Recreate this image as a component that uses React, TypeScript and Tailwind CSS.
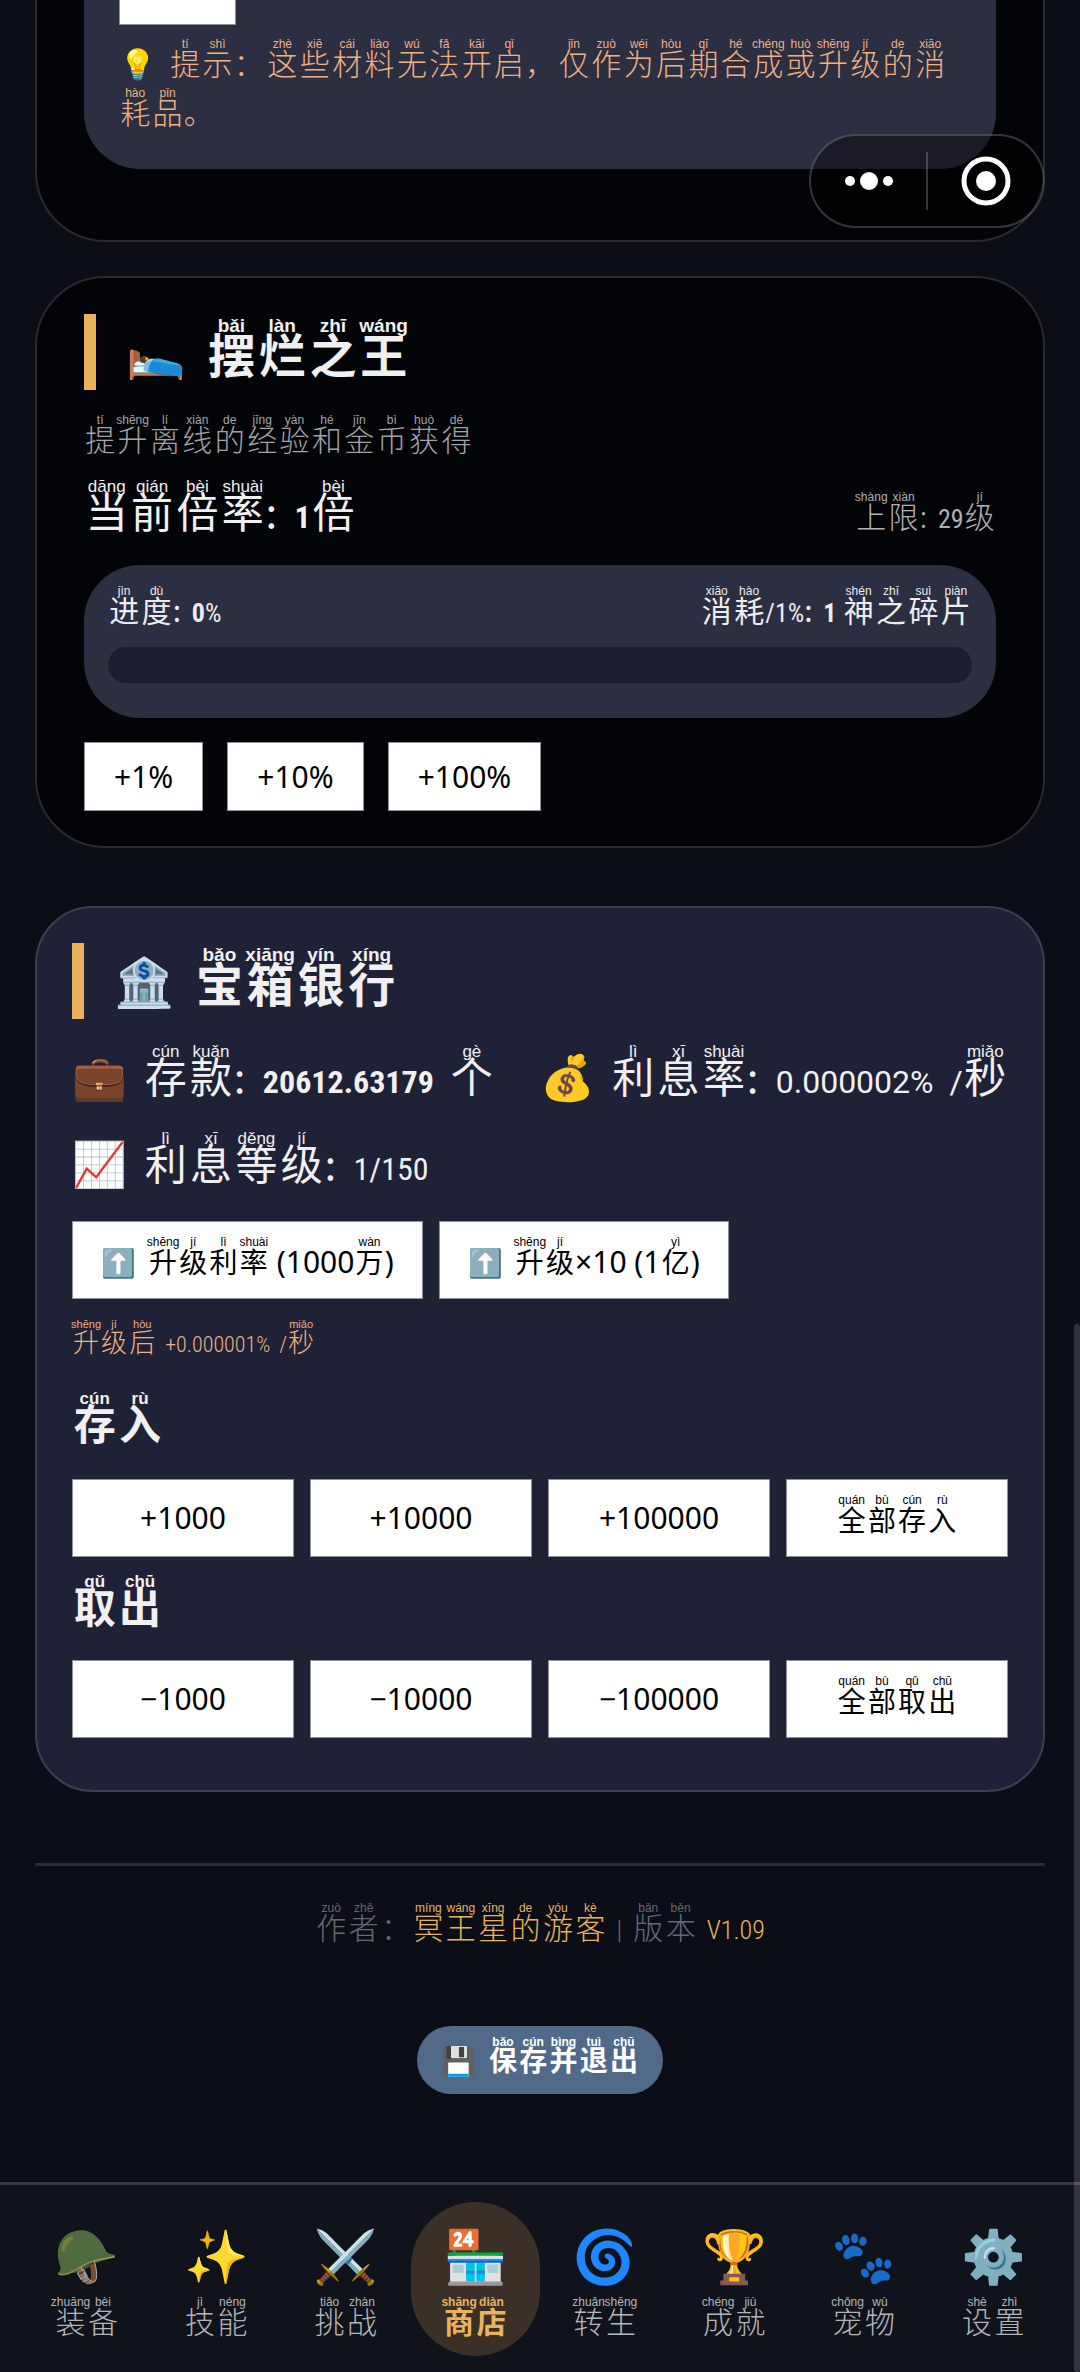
import type { ButtonHTMLAttributes, ReactNode } from "react";
import { clsx } from "clsx";

type Size = "title" | "section" | "body" | "button" | "note";

const SIZES: Record<Size, { base: string; rt: string; latin: string; colon: string }> = {
  title: { base: "text-[47px] font-bold", rt: "mt-0.5 -mb-0.5 text-[19px] font-bold", latin: "text-[36px]", colon: "mr-2" },
  section: { base: "text-[42px]", rt: "mt-0.5 -mb-0.5 text-[17px]", latin: "text-[32px]", colon: "mr-2" },
  body: { base: "text-[30px]", rt: "text-[12px]", latin: "text-[26px]", colon: "mr-1" },
  button: { base: "text-[28px]", rt: "text-[12px]", latin: "text-[30px]", colon: "mr-1" },
  note: { base: "text-[26px]", rt: "text-[11px]", latin: "text-[22px]", colon: "mr-1" },
};

const HANZI = /[\u4e00-\u9fff]/;
const FULLWIDTH = /[\u3000-\u303f\uff00-\uffef]/;

// Single CJK characters, colons, and runs of everything else
const TOKENS = /[\u3000-\u9fff\uff00-\uffef]|: ?|[^\u3000-\u9fff\uff00-\uffef:]+/g;

function Pinyin({ text, py = "", size = "body", className }: { text: string; py?: string; size?: Size; className?: string }) {
  const syllables = py.split(" ");
  const s = SIZES[size];
  let next = 0;

  return (
    <span className={clsx("whitespace-pre-wrap", className)}>
      {(text.match(TOKENS) ?? []).map((token, i) => {
        if (HANZI.test(token)) {
          return (
            <ruby key={i} className={clsx("inline-block w-[1.08em] text-center leading-none", s.base)}>
              <rt
                className={clsx(
                  "-mx-4 block text-center leading-none whitespace-nowrap font-['Liberation_Sans',sans-serif]",
                  s.rt,
                )}
              >
                {syllables[next++]}
              </rt>
              {token}
            </ruby>
          );
        }
        if (FULLWIDTH.test(token)) {
          return (
            <span key={i} className={clsx("inline-block w-[1.08em] leading-none", s.base)}>
              {token}
            </span>
          );
        }
        return (
          <span
            key={i}
            className={
              token.startsWith(":") ? clsx("font-['Noto_Sans_CJK_SC',sans-serif]", s.base, s.colon) : s.latin
            }
          >
            {token}
          </span>
        );
      })}
    </span>
  );
}

function CardTitle({ icon, text, py }: { icon: string; text: string; py: string }) {
  return (
    <h2 className="flex h-[76px] items-start border-l-12 border-[#e9b35b] pl-[30px] text-[#f0f0f2]">
      <span className="mt-4 text-[48px] leading-none">{icon}</span>
      <Pinyin text={text} py={py} size="title" className="ml-5 leading-none" />
    </h2>
  );
}

function WhiteButton({ className, ...props }: ButtonHTMLAttributes<HTMLButtonElement>) {
  return (
    <button
      type="button"
      className={clsx(
        "border border-[#8f8f96] bg-white text-[30px] leading-none text-black font-['Noto_Sans','Noto_Sans_CJK_SC',sans-serif]",
        className,
      )}
      {...props}
    />
  );
}

function AmountRow({ amounts, children }: { amounts: string[]; children: ReactNode }) {
  return (
    <div className="grid grid-cols-4 gap-4">
      {amounts.map((amount) => (
        <WhiteButton key={amount} className="h-[78px]">
          {amount}
        </WhiteButton>
      ))}
      <WhiteButton className="h-[78px] pb-2">{children}</WhiteButton>
    </div>
  );
}

function Capsule() {
  return (
    <div className="absolute top-[134px] right-[35px] flex h-[94px] w-[236px] items-center rounded-full border-2 border-white/20 bg-black/40">
      <button type="button" aria-label="更多" className="flex flex-1 justify-center">
        <svg width="50" height="20" viewBox="0 0 50 20" fill="#fff">
          <circle cx="6" cy="10" r="5" />
          <circle cx="25" cy="10" r="9" />
          <circle cx="44" cy="10" r="5" />
        </svg>
      </button>
      <span className="h-[58px] w-[2px] bg-white/20" />
      <button type="button" aria-label="关闭" className="flex flex-1 justify-center">
        <svg width="50" height="50" viewBox="0 0 50 50">
          <circle cx="25" cy="25" r="22" fill="none" stroke="#fff" strokeWidth="5" />
          <circle cx="25" cy="25" r="10" fill="#fff" />
        </svg>
      </button>
    </div>
  );
}

function MaterialsCard() {
  return (
    <section className="rounded-b-[70px] border-2 border-t-0 border-[#2a2a2e] bg-[#030407] px-[47px] pb-[71px]">
      <div className="rounded-b-[56px] bg-[#2c2e41] px-[35px] pb-10">
        <WhiteButton aria-label="材料" className="block h-[25px] w-[117px] border-t-0" />
        <p className="mt-[6px] leading-none font-light text-[#f0b081]">
          <span className="inline-block w-[50px] text-[30px] leading-none">💡</span>
          <Pinyin
            text="提示：这些材料无法开启，仅作为后期合成或升级的消耗品。"
            py="tí shì zhè xiē cái liào wú fǎ kāi qǐ jǐn zuò wéi hòu qī hé chéng huò shēng jí de xiāo hào pǐn"
            className="[&>ruby]:mt-[7px]"
          />
        </p>
      </div>
    </section>
  );
}

function SlackerCard() {
  return (
    <section className="mt-[34px] rounded-[70px] border-2 border-[#2a2a2e] bg-[#030407] px-[47px] pt-9 pb-[35px]">
      <CardTitle icon="🛌" text="摆烂之王" py="bǎi làn zhī wáng" />
      <p className="mt-6 leading-none font-light text-[#a3a3a7]">
        <Pinyin text="提升离线的经验和金币获得" py="tí shēng lí xiàn de jīng yàn hé jīn bì huò dé" />
      </p>
      <div className="mt-5 flex items-baseline justify-between leading-none">
        <p className="text-[#f0f0f2]">
          <Pinyin text="当前倍率: " py="dāng qián bèi shuài" size="section" />
          <b>
            <Pinyin text="1" size="section" />
          </b>
          <Pinyin text="倍" py="bèi" size="section" />
        </p>
        <p className="font-light text-[#b0b0b4]">
          <Pinyin text="上限: " py="shàng xiàn" />
          <b>
            <Pinyin text="29" />
          </b>
          <Pinyin text="级" py="jí" />
        </p>
      </div>
      <div className="mt-[30px] rounded-[56px] bg-[#2c2e41] px-6 pt-5 pb-[35px] text-[#ececf0]">
        <div className="flex justify-between leading-none">
          <span>
            <Pinyin text="进度: " py="jìn dù" />
            <b>
              <Pinyin text="0" />
            </b>
            <Pinyin text="%" />
          </span>
          <span>
            <Pinyin text="消耗/1%: " py="xiāo hào" />
            <b>
              <Pinyin text="1" />
            </b>
            <Pinyin text=" 神之碎片" py="shén zhī suì piàn" />
          </span>
        </div>
        <div
          role="progressbar"
          aria-label="进度"
          aria-valuenow={0}
          aria-valuemin={0}
          aria-valuemax={100}
          className="mt-5 h-9 rounded-full bg-[#1c1e30]"
        />
      </div>
      <div className="mt-6 flex gap-6">
        {["+1%", "+10%", "+100%"].map((step) => (
          <WhiteButton key={step} className="h-[69px] px-[29px]">
            {step}
          </WhiteButton>
        ))}
      </div>
    </section>
  );
}

function StatIcon({ children }: { children: string }) {
  return <span className="mr-4 text-[44px] leading-none">{children}</span>;
}

function BankCard() {
  return (
    <section className="mt-[58px] rounded-[58px] border-2 border-[#3c3e52] bg-[#1f2136] px-[35px] pt-[35px] pb-[52px] text-[#f0f0f2]">
      <CardTitle icon="🏦" text="宝箱银行" py="bǎo xiāng yín xíng" />
      <div className="mt-[22px] flex flex-wrap items-end justify-between leading-none">
        <p className="flex items-end">
          <StatIcon>💼</StatIcon>
          <span>
            <Pinyin text="存款: " py="cún kuǎn" size="section" />
            <b>
              <Pinyin text="20612.63179" size="section" />
            </b>
            <Pinyin text=" 个" py="gè" size="section" className="ml-2" />
          </span>
        </p>
        <p className="flex items-end">
          <StatIcon>💰</StatIcon>
          <span className="font-['Roboto','Noto_Sans_CJK_SC',sans-serif]">
            <Pinyin text="利息率: 0.000002%" py="lì xī shuài" size="section" />
            <Pinyin text=" /秒" py="miǎo" size="section" className="ml-2" />
          </span>
        </p>
        <p className="mt-7 flex items-end">
          <StatIcon>📈</StatIcon>
          <Pinyin text="利息等级: 1/150" py="lì xī děng jí" size="section" />
        </p>
      </div>
      <div className="mt-[34px] flex gap-4">
        <WhiteButton className="h-[78px] px-7 pb-2">
          <span className="mr-3 text-[28px]">⬆️</span>
          <Pinyin text="升级利率 (1000万)" py="shēng jí lì shuài wàn" size="button" />
        </WhiteButton>
        <WhiteButton className="h-[78px] px-7 pb-2">
          <span className="mr-3 text-[28px]">⬆️</span>
          <Pinyin text="升级×10 (1亿)" py="shēng jí yì" size="button" />
        </WhiteButton>
      </div>
      <p className="mt-5 leading-none font-light text-[#f0b081]">
        <Pinyin text="升级后 " py="shēng jí hòu" size="note" />
        <Pinyin text="+0.000001%" size="note" className="mx-1" />
        <Pinyin text=" /秒" py="miǎo" size="note" />
      </p>
      <h3 className="mt-8 mb-8 leading-none font-bold">
        <Pinyin text="存入" py="cún rù" size="section" />
      </h3>
      <AmountRow amounts={["+1000", "+10000", "+100000"]}>
        <Pinyin text="全部存入" py="quán bù cún rù" size="button" />
      </AmountRow>
      <h3 className="mt-[14px] mb-[30px] leading-none font-bold">
        <Pinyin text="取出" py="qǔ chū" size="section" />
      </h3>
      <AmountRow amounts={["−1000", "−10000", "−100000"]}>
        <Pinyin text="全部取出" py="quán bù qǔ chū" size="button" />
      </AmountRow>
    </section>
  );
}

const TABS = [
  { icon: "🪖", text: "装备", py: "zhuāng bèi" },
  { icon: "✨", text: "技能", py: "jì néng" },
  { icon: "⚔️", text: "挑战", py: "tiǎo zhàn" },
  { icon: "🏪", text: "商店", py: "shāng diàn", active: true },
  { icon: "🌀", text: "转生", py: "zhuǎn shēng" },
  { icon: "🏆", text: "成就", py: "chéng jiù" },
  { icon: "🐾", text: "宠物", py: "chǒng wù" },
  { icon: "⚙️", text: "设置", py: "shè zhì" },
];

function TabBar() {
  return (
    <nav className="sticky bottom-0 flex border-t-3 border-[#35383f] bg-[#10131b] px-[22px] pt-[17px] pb-4">
      {TABS.map((tab) => (
        <a
          key={tab.text}
          href="#"
          aria-current={tab.active ? "page" : undefined}
          className={clsx(
            "flex h-[154px] flex-1 flex-col items-center rounded-full pt-[22px]",
            tab.active ? "bg-[#3a3027] font-bold text-[#e9b35b]" : "font-light text-[#b4b5b9]",
          )}
        >
          <span className="text-[52px] leading-[68px]">{tab.icon}</span>
          <Pinyin text={tab.text} py={tab.py} className="mt-1 leading-none" />
        </a>
      ))}
    </nav>
  );
}

export default function App() {
  return (
    <div className="relative flex min-h-screen flex-col bg-[#0b0d17] font-['Roboto_Condensed','Noto_Sans_CJK_SC',sans-serif]">
      <main className="flex-1 px-[35px]">
        <MaterialsCard />
        <SlackerCard />
        <BankCard />
        <footer className="mt-[71px] border-t-3 border-[#2b2d36] pt-9 text-center">
          <p className="leading-none font-light text-[#666870]">
            <Pinyin text="作者：" py="zuò zhě" />
            <Pinyin text="冥王星的游客" py="míng wáng xīng de yóu kè" className="text-[#e9b35b]" />
            <Pinyin text=" | " className="mx-1" />
            <Pinyin text="版本 " py="bǎn běn" />
            <Pinyin text="V1.09" className="ml-1 text-[#e9b35b]" />
          </p>
          <button
            type="button"
            className="mt-[82px] mb-20 h-[68px] rounded-full bg-[#526a8a] px-6 pb-2 leading-none font-bold text-white"
          >
            <span className="mr-3 text-[28px]">💾</span>
            <Pinyin text="保存并退出" py="bǎo cún bìng tuì chū" size="button" />
          </button>
        </footer>
      </main>
      <TabBar />
      <Capsule />
      <div className="absolute right-0 bottom-0 h-[1048px] w-[6px] rounded-full bg-white/15" />
    </div>
  );
}
